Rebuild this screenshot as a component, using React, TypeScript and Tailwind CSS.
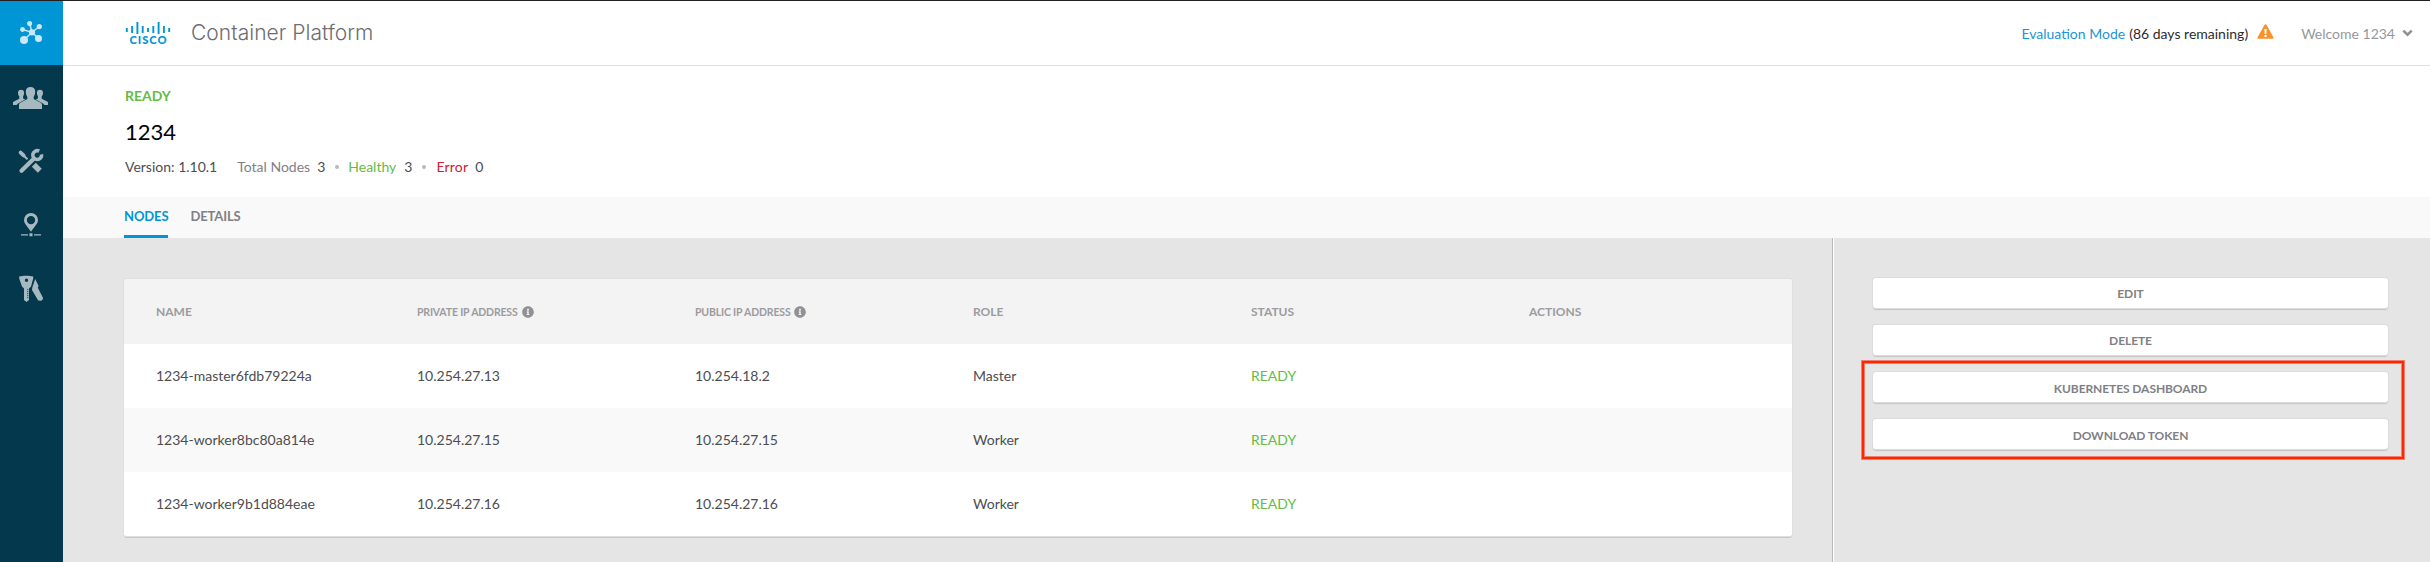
import type { ReactNode } from 'react';
import { FaInfoCircle } from 'react-icons/fa';

const nodes = [
  { name: '1234-master6fdb79224a', priv: '10.254.27.13', pub: '10.254.18.2', role: 'Master' },
  { name: '1234-worker8bc80a814e', priv: '10.254.27.15', pub: '10.254.27.15', role: 'Worker' },
  { name: '1234-worker9b1d884eae', priv: '10.254.27.16', pub: '10.254.27.16', role: 'Worker' },
];

const bars = [
  [27, 31], [25, 32], [21, 33], [25, 32], [27, 31], [25, 32], [21, 33], [25, 32], [27, 31],
];

function CiscoLogo() {
  return (
    <svg width="46" height="25" viewBox="125 20 46 25" className="text-[#0096d6]">
      {bars.map(([y1, y2], i) => (
        <line key={i} x1={126.8 + i * 5.3} x2={126.8 + i * 5.3} y1={y1} y2={y2} stroke="currentColor" strokeWidth="1.9" />
      ))}
      <text x="129.5" y="43.4" textLength="37" fontSize="11.2" className="fill-current font-['Lato'] font-black">CISCO</text>
    </svg>
  );
}

function HubIcon() {
  return (
    <svg width="63" height="64" viewBox="0 1 63 64" className="text-[#cbe8f7]">
      <path d="M32 32.3 29.7 23.7M32 32.3 39.3 26.5M32 32.3 22.5 29.5M32 32.3 24 40M32 32.3 38.5 38.5" stroke="currentColor" strokeWidth="1.4" />
      <g fill="currentColor">
        <circle cx="32" cy="32.3" r="3.1" />
        <circle cx="29.6" cy="23.6" r="2.5" />
        <circle cx="39.3" cy="26.6" r="2.6" />
        <circle cx="22.5" cy="29.5" r="2.4" />
        <circle cx="24" cy="40" r="4" />
        <circle cx="38.5" cy="38.5" r="3.5" />
      </g>
    </svg>
  );
}

function UsersIcon() {
  return (
    <svg width="63" height="64" viewBox="0 65 63 64" fill="currentColor">
      <path d="M30.5 87c3 0 4.7 1.700 4.700 4.500 0 2.300-.6 4-1.500 5.200v2.300l7 3.800c1 .6 1.300 1.200 1.300 2.200v4H19v-4c0-1 .3-1.600 1.300-2.200l7-3.800v-2.300c-.9-1.200-1.500-2.900-1.500-5.200 0-2.800 1.700-4.500 4.700-4.500z" />
      <path d="M13 102l6.300-3.300v-2.400c-1-1-1.300-2-1.300-3.200 0-2.200 1.200-3.300 3.100-3.300s3 1.100 3 3.300c0 1.300-.3 2.300-1 3.200v2.200l2.200 1-7.300 4-1.500 1.500H13z" />
      <path d="M48 102l-6.300-3.300v-2.400c1-1 1.300-2 1.300-3.200 0-2.200-1.200-3.300-3.100-3.300s-3 1.100-3 3.300c0 1.300.3 2.300 1 3.200v2.200l-2.200 1 7.300 4 1.500 1.500H48z" />
    </svg>
  );
}

function ToolsIcon() {
  return (
    <svg width="63" height="64" viewBox="0 129 63 64" fill="none" stroke="currentColor">
      <path d="M20.600 152.600l3 2.800" strokeWidth="3.8" strokeLinecap="round" />
      <path d="M22.500 154.500l5 4.700" strokeWidth="2" />
      <path d="M33.800 164.800l6 6" strokeWidth="5.500" />
      <path d="M21.500 170.700L34 158.500" strokeWidth="4.200" strokeLinecap="round" />
      <path d="M39.200 151.200a4.400 4.400 0 1 0 2.300 3.100" strokeWidth="3.600" />
    </svg>
  );
}

function PinIcon() {
  return (
    <svg width="63" height="64" viewBox="0 193 63 64" fill="currentColor">
      <path fillRule="evenodd" d="M31 213a7 7 0 0 1 7 7c0 4-4.500 7.500-7 11.700C28.500 227.500 24 224 24 220a7 7 0 0 1 7-7zm0 2.900a4.200 4.200 0 1 0 0 8.400 4.200 4.200 0 0 0 0-8.400z" />
      <path d="M21 234.300h7v1.200h-7zM34 234.300h7v1.200h-7zM29.500 233.300h3v3h-3z" />
    </svg>
  );
}

function KeysIcon() {
  return (
    <svg width="63" height="64" viewBox="0 257 63 64" fill="currentColor">
      <path fillRule="evenodd" d="M19.200 276.500c4-1 10-1 14 0v2l-2.200 8-2 2V300l-2.500 2-2.500-2v-11.500l-2-2-2.800-8zm7.300 2a1.700 1.700 0 1 0 0 3.400 1.700 1.700 0 0 0 0-3.400z" />
      <path d="M27.800 289v10" stroke="#04384c" strokeWidth="0.900" strokeDasharray="1.2 .8" />
      <path d="M35.200 279l3.400 7-.8 1.800 5 9.700.2 1.500-1.600 1.800-3.200-.3-6.200-10.500.3-2.500z" />
    </svg>
  );
}

function WarningIcon() {
  return (
    <svg width="17" height="15" viewBox="0 0 17 15" className="mb-[3px] ml-[9px]">
      <path d="M8.500.3c.5 0 .9.300 1.100.7l6.800 12.200c.4.800 0 1.500-.9 1.500h-14c-.9 0-1.300-.7-.9-1.500L7.400 1c.2-.4.600-.7 1.100-.7z" fill="#f7932a" />
      <path d="M7.300 5h2.400l-.4 5H7.700zM7.400 11h2.200v2H7.400z" fill="#fff" />
    </svg>
  );
}

function ChevronIcon() {
  return (
    <svg width="11" height="8" viewBox="0 0 11 8" className="ml-[7px]">
      <path d="M1.300 1.600l4.200 4 4.200-4" fill="none" stroke="#8f8f94" strokeWidth="2.600" />
    </svg>
  );
}

function Th({ children, info }: { children: ReactNode; info?: boolean }) {
  return info ? (
    <div className="flex items-center gap-1 pl-[15px] text-[10.5px] font-bold tracking-[-0.17px] text-[#9b9ba0]">
      <span className="pt-[3px]">{children}</span>
      <FaInfoCircle className="size-3 text-[#919195]" />
    </div>
  ) : (
    <div className="flex items-center pl-[15px] text-[12px] font-bold text-[#9b9ba0] first:pl-8">{children}</div>
  );
}

function SideButton({ children, low }: { children: ReactNode; low?: boolean }) {
  return (
    <button
      className={`flex h-[30px] w-full items-center justify-center rounded-[3px] bg-white text-[12px] font-bold tracking-[-0.08px] text-[#7f7f86] shadow-[0_0_0_1px_#dcdcdc,0_2px_1px_#c4c4c4] ${low ? 'pt-[3px]' : 'pt-px'}`}
    >
      {children}
    </button>
  );
}

export default function App() {
  return (
    <div className="flex h-[562px] w-[2430px] flex-col overflow-hidden border-t border-[#231f20] bg-white font-['Lato',sans-serif] text-[14px] text-[#4d4d51]">
      <div className="flex min-h-0 flex-1">
        <nav className="flex w-[63px] flex-none flex-col bg-[#04384c] text-[#a6b9c1]">
          <div className="h-16 bg-[#0096d6]"><HubIcon /></div>
          <UsersIcon />
          <ToolsIcon />
          <PinIcon />
          <KeysIcon />
        </nav>
        <div className="flex flex-1 flex-col">
          <header className="flex h-[65px] flex-none items-center border-b border-[#e0e0e2] pr-[17px] pl-[62px]">
            <CiscoLogo />
            <h1 className="ml-5 font-['Inter',sans-serif] text-[21px] font-light tracking-[0.04px] text-[#6c6c71]">Container Platform</h1>
            <div className="ml-auto flex items-center">
              <span className="text-[#1a96d4]">Evaluation Mode</span>
              <span className="ml-1 text-[#2c2c2e]">(86 days remaining)</span>
              <WarningIcon />
              <span className="ml-[27px] text-[#97979b]">Welcome 1234</span>
              <ChevronIcon />
            </div>
          </header>
          <section className="flex h-[131px] flex-none flex-col pl-[62px]">
            <div className="mt-5 text-[14px] leading-5 font-bold text-[#64bb46]">READY</div>
            <div className="mt-[10px] text-[22px] leading-8 text-black">1234</div>
            <div className="mt-[9px] flex items-center leading-5">
              <span>Version: 1.10.1</span>
              <span className="ml-5 text-[#7f7f86]">Total Nodes</span>
              <span className="ml-[7px]">3</span>
              <span className="mx-[9.5px] size-1 rounded-full bg-[#b9b9bd]" />
              <span className="text-[#64bb46]">Healthy</span>
              <span className="ml-2">3</span>
              <span className="mx-[10px] size-1 rounded-full bg-[#b9b9bd]" />
              <span className="tracking-[0.2px] text-[#cf2030]">Error</span>
              <span className="ml-[7px]">0</span>
            </div>
          </section>
          <div className="flex h-[41px] flex-none gap-[22px] bg-[#f9f9f9] pl-[61px] text-[13px] font-bold tracking-[-0.12px]">
            <div className="border-b-3 border-[#0096d6] pt-[9px] leading-5 text-[#0096d6]">NODES</div>
            <div className="pt-[9px] leading-5 text-[#7f7f86]">DETAILS</div>
          </div>
          <main className="flex flex-1 bg-[#e5e5e5]">
            <div className="w-[1770px] flex-none border-r border-[#b9b9b9] pt-[41px] pl-[61px]">
              <div className="w-[1668px] overflow-hidden rounded-[3px] bg-white shadow-[0_0_0_1px_#dfdfdf,0_2px_0_#c8c8c8]">
                <div className="grid h-[65px] grid-cols-6 bg-[#f3f3f3]">
                  <Th>NAME</Th>
                  <Th info>PRIVATE IP ADDRESS</Th>
                  <Th info>PUBLIC IP ADDRESS</Th>
                  <Th>ROLE</Th>
                  <Th>STATUS</Th>
                  <Th>ACTIONS</Th>
                </div>
                {nodes.map((n) => (
                  <div key={n.name} className="grid h-16 grid-cols-6 items-center pb-[2px] even:bg-white odd:bg-[#f9f9f9]">
                    <span className="pl-8">{n.name}</span>
                    <span className="pl-[15px]">{n.priv}</span>
                    <span className="pl-[15px]">{n.pub}</span>
                    <span className="pl-[15px]">{n.role}</span>
                    <span className="pl-[15px] text-[#64bb46]">READY</span>
                    <span />
                  </div>
                ))}
              </div>
            </div>
            <aside className="flex flex-1 flex-col gap-[17px] border-l border-white pt-10 pr-[42px] pl-[39px]">
              <SideButton>EDIT</SideButton>
              <SideButton>DELETE</SideButton>
              <div className="relative flex flex-col gap-[17px]">
                <div className="absolute -top-[11px] -right-4 -left-[11px] h-[98px] border-2 border-[#ff2600] shadow-[0_0_0_1px_#f08070,inset_0_0_0_1px_#f08070]" />
                <SideButton low>KUBERNETES DASHBOARD</SideButton>
                <SideButton low>DOWNLOAD TOKEN</SideButton>
              </div>
            </aside>
          </main>
        </div>
      </div>
    </div>
  );
}
